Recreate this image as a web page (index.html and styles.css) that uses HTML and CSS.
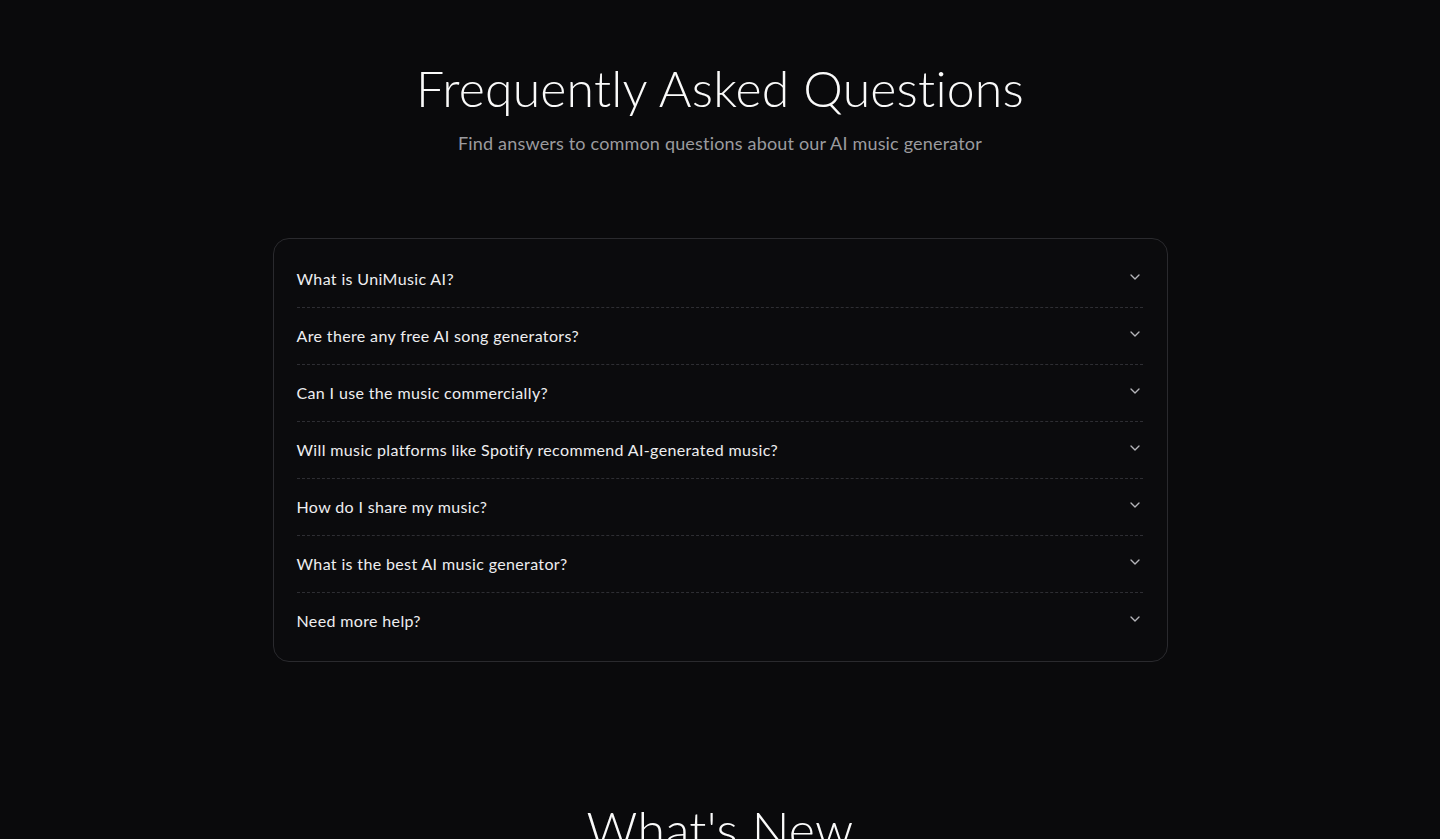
FILE: index.html
```html
<!DOCTYPE html>
<html lang="en">
<head>
<meta charset="utf-8">
<title>FAQ</title>
<link rel="stylesheet" href="styles.css">
</head>
<body>
<main class="page">
  <section class="faq">
    <header class="faq-head">
      <h2 class="title">Frequently Asked Questions</h2>
      <p class="subtitle">Find answers to common questions about our AI music generator</p>
    </header>
    <div class="card">
      <div class="item"><span class="q">What is UniMusic AI?</span><svg class="chev" viewBox="0 0 24 24"><path d="m6 9 6 6 6-6"/></svg></div>
      <div class="item"><span class="q">Are there any free AI song generators?</span><svg class="chev" viewBox="0 0 24 24"><path d="m6 9 6 6 6-6"/></svg></div>
      <div class="item"><span class="q">Can I use the music commercially?</span><svg class="chev" viewBox="0 0 24 24"><path d="m6 9 6 6 6-6"/></svg></div>
      <div class="item"><span class="q">Will music platforms like Spotify recommend AI-generated music?</span><svg class="chev" viewBox="0 0 24 24"><path d="m6 9 6 6 6-6"/></svg></div>
      <div class="item"><span class="q">How do I share my music?</span><svg class="chev" viewBox="0 0 24 24"><path d="m6 9 6 6 6-6"/></svg></div>
      <div class="item"><span class="q">What is the best AI music generator?</span><svg class="chev" viewBox="0 0 24 24"><path d="m6 9 6 6 6-6"/></svg></div>
      <div class="item last"><span class="q">Need more help?</span><svg class="chev" viewBox="0 0 24 24"><path d="m6 9 6 6 6-6"/></svg></div>
    </div>
  </section>
  <section class="news">
    <h2 class="title">What's New</h2>
  </section>
</main>
</body>
</html>
```
FILE: styles.css
```css
* { box-sizing: border-box; }
html, body { margin: 0; padding: 0; }
body {
  background: #0a0a0c;
  color: #f2f2f2;
  font-family: Lato, "Noto Sans", sans-serif;
  overflow: hidden;
  height: 839px;
}
.page { display: flex; flex-direction: column; align-items: center; }
.faq { width: 895px; padding-top: 60px; display: flex; flex-direction: column; }
.faq-head { text-align: center; }
.title {
  margin: 0;
  font-weight: 300;
  font-size: 50px;
  line-height: 56px;
  letter-spacing: 0.2px;
  color: #fafafa;
}
.subtitle {
  margin: 13px 0 0;
  font-size: 18px;
  line-height: 28px;
  letter-spacing: 0.18px;
  color: #9b9b9f;
  font-weight: 400;
}
.card {
  margin-top: 81px;
  border: 1px solid #2a2a2e;
  border-radius: 16px;
  padding: 12px 24px 12px 23px;
  background: #0b0b0d;
}
.item {
  display: flex;
  align-items: center;
  justify-content: space-between;
  padding: 16px 0;
  border-bottom: 1px dashed #2e2e33;
}
.item.last { border-bottom: none; }
.q { font-size: 16px; line-height: 24px; letter-spacing: 0.36px; color: #eeeef0; }
.chev {
  width: 16px; height: 16px;
  fill: none; stroke: #b5b5ba; stroke-width: 2;
  stroke-linecap: round; stroke-linejoin: round;
  margin-top: -4px;
}
.news { padding-top: 139px; text-align: center; }
```
